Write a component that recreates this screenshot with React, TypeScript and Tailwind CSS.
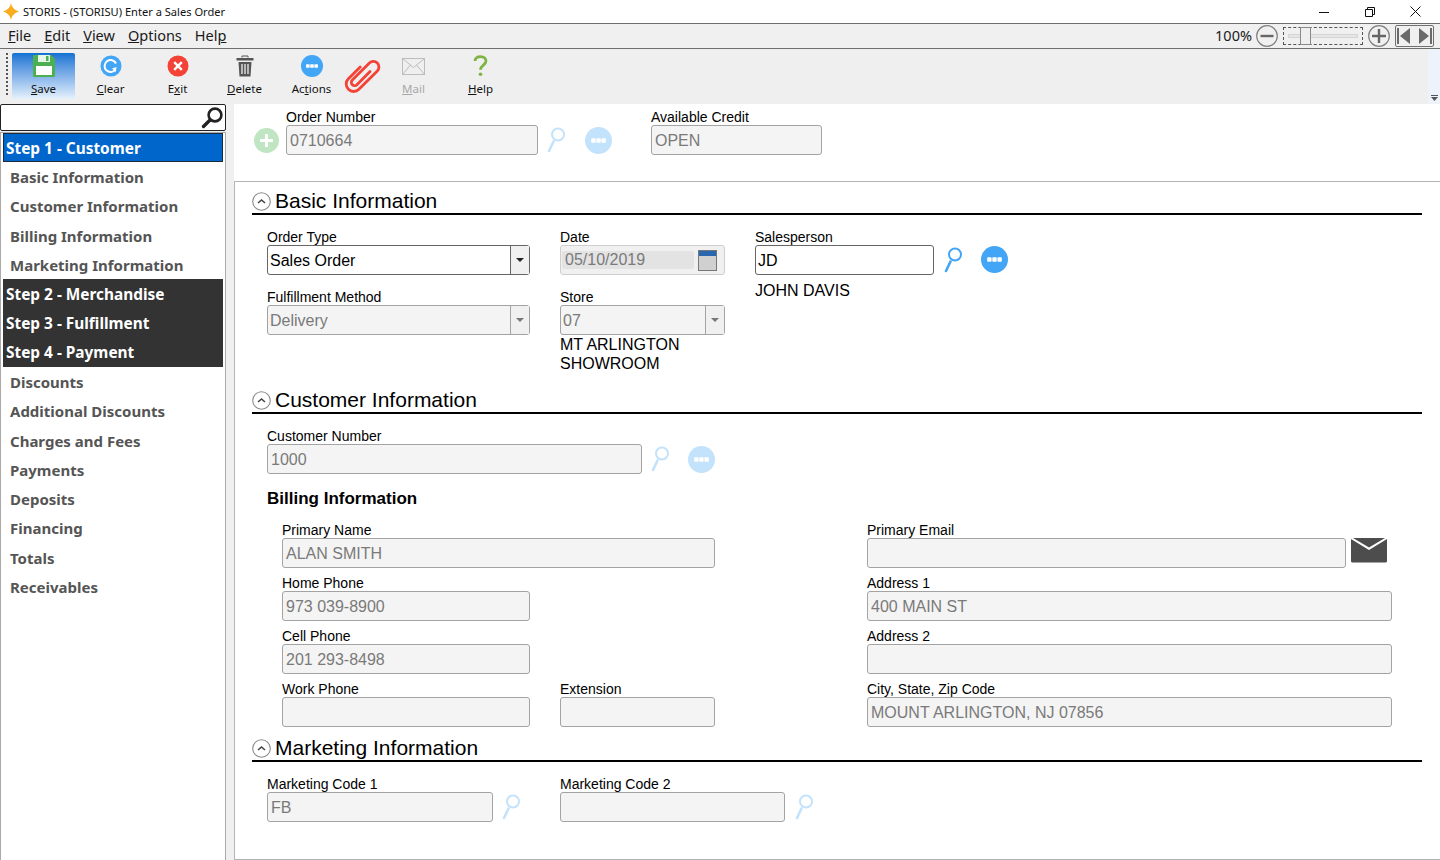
import type { ReactNode } from 'react'

const SEGOE = "font-['Noto_Sans',sans-serif]"

function SearchGlass({ off }: { off?: boolean }) {
  const color = off ? '#c3e2fb' : '#42a5f5'
  return (
    <svg width="18" height="26" viewBox="0 0 18 26" fill="none">
      <circle cx="11" cy="7.500" r="6" stroke={color} strokeWidth="2" />
      <line x1="6.500" y1="14.500" x2="2" y2="24" stroke={color} strokeWidth="2.600" strokeLinecap="round" />
    </svg>
  )
}

function Dots({ off, size = 27 }: { off?: boolean; size?: number }) {
  return (
    <svg width={size} height={size} viewBox="0 0 27 27">
      <circle cx="13.500" cy="13.500" r="13.500" fill={off ? '#c3e2fb' : '#42a5f5'} />
      <rect x="6.200" y="11.300" width="4.400" height="4.400" rx="0.800" fill="#fff" />
      <rect x="11.300" y="11.300" width="4.400" height="4.400" rx="0.800" fill="#fff" />
      <rect x="16.400" y="11.300" width="4.400" height="4.400" rx="0.800" fill="#fff" />
    </svg>
  )
}

function Caret({ off }: { off?: boolean }) {
  return (
    <svg width="8" height="4" viewBox="0 0 8 4">
      <path d="M0 0h8L4 4z" fill={off ? '#777' : '#222'} />
    </svg>
  )
}

function Label({ children }: { children: ReactNode }) {
  return <div className="h-[15px] text-[14px] leading-[15px] text-black whitespace-nowrap">{children}</div>
}

function Input({ value, w, active }: { value?: string; w: string; active?: boolean }) {
  return (
    <div
      className={`${w} h-[30px] rounded-[3px] border text-[16px] leading-[30px] whitespace-nowrap ${
        active ? 'border-[#666] bg-white px-[2px] text-black' : 'border-[#a3a3a3] bg-[#f4f4f4] px-[3px] text-[#7a7a7a]'
      }`}
    >
      {value}
    </div>
  )
}

function Field({ label, value, w, active }: { label: string; value?: string; w: string; active?: boolean }) {
  return (
    <div>
      <Label>{label}</Label>
      <Input value={value} w={w} active={active} />
    </div>
  )
}

function Select({ value, w, off }: { value: string; w: string; off?: boolean }) {
  return (
    <div
      className={`${w} flex h-[30px] rounded-[3px] border text-[16px] leading-[30px] ${
        off ? 'border-[#a3a3a3] bg-[#f4f4f4] text-[#7a7a7a]' : 'border-[#666] bg-white text-black'
      }`}
    >
      <div className="h-[28px] flex-1 px-[2px]">{value}</div>
      <div
        className={`flex w-[19px] items-center justify-center border-l bg-[#f0f0f0] ${
          off ? 'border-[#a3a3a3]' : 'border-[#666]'
        }`}
      >
        <Caret off={off} />
      </div>
    </div>
  )
}

function SectionHeader({ title }: { title: string }) {
  return (
    <div className="ml-[17px] mr-[18px] flex h-[25px] items-center gap-[4px] border-b-2 border-black pb-[1px]">
      <svg width="19" height="19" viewBox="0 0 19 19" fill="none" className="shrink-0">
        <circle cx="9.500" cy="9.500" r="8.800" stroke="#8a8a8a" strokeWidth="1.100" />
        <path d="M6 11l3.500-3 3.500 3" stroke="#444" strokeWidth="1.600" />
      </svg>
      <span className="text-[21px] leading-[24px] text-black whitespace-nowrap">{title}</span>
    </div>
  )
}

function ToolButton({ label, icon, active, off }: { label: [string, string, string]; icon: ReactNode; active?: boolean; off?: boolean }) {
  return (
    <div
      className={`flex h-[46px] w-[63px] flex-col items-center rounded-[2px] ${
        active ? 'bg-gradient-to-b from-[#0a72d2] to-[#e6f1fb]' : ''
      }`}
    >
      <div className="flex h-[26px] items-center justify-center">{icon}</div>
      <div className={`${SEGOE} mt-[2px] text-[11.500px] leading-[16px] whitespace-nowrap ${off ? 'text-[#a8a8a8]' : 'text-[#111]'}`}>
        {label[0]}
        <span className="underline">{label[1]}</span>
        {label[2]}
      </div>
    </div>
  )
}

const SIDE_ROWS: { text: string; kind: 'blue' | 'dark' | 'item' }[] = [
  { text: 'Step 1 - Customer', kind: 'blue' },
  { text: 'Basic Information', kind: 'item' },
  { text: 'Customer Information', kind: 'item' },
  { text: 'Billing Information', kind: 'item' },
  { text: 'Marketing Information', kind: 'item' },
  { text: 'Step 2 - Merchandise', kind: 'dark' },
  { text: 'Step 3 - Fulfillment', kind: 'dark' },
  { text: 'Step 4 - Payment', kind: 'dark' },
  { text: 'Discounts', kind: 'item' },
  { text: 'Additional Discounts', kind: 'item' },
  { text: 'Charges and Fees', kind: 'item' },
  { text: 'Payments', kind: 'item' },
  { text: 'Deposits', kind: 'item' },
  { text: 'Financing', kind: 'item' },
  { text: 'Totals', kind: 'item' },
  { text: 'Receivables', kind: 'item' },
]

function Sidebar() {
  return (
    <aside className="flex w-[226px] shrink-0 flex-col">
      <div className="flex h-[27px] items-center justify-end rounded-[2px] border border-[#222] bg-white pr-[1px]">
        <svg width="23" height="23" viewBox="0 0 23 23" fill="none">
          <circle cx="14" cy="9" r="6.400" stroke="#222" strokeWidth="2.600" />
          <line x1="9" y1="14" x2="2.500" y2="20.500" stroke="#222" strokeWidth="3.400" strokeLinecap="round" />
        </svg>
      </div>
      <div className={`${SEGOE} mt-[1px] flex-1 border border-b-0 border-[#aaa] bg-white pl-[2px] pr-[2px] text-[15px] font-bold`}>
        {SIDE_ROWS.map(row => (
          <div
            key={row.text}
            className={`flex h-[29.270px] items-center whitespace-nowrap pt-[1px] ${
              row.kind === 'blue'
                ? 'border border-[#1c2b3a] bg-[#0066cc] pl-[2px] text-[15.400px] text-white'
                : row.kind === 'dark'
                  ? 'bg-[#333333] pl-[3px] text-[15.400px] text-white'
                  : 'pl-[7px] text-[#555555]'
            }`}
          >
            {row.text}
          </div>
        ))}
      </div>
    </aside>
  )
}

export default function App() {
  return (
    <div className="flex h-[860px] w-[1440px] flex-col overflow-hidden bg-[#f0f0f0] font-['Liberation_Sans',sans-serif]">
      {/* Title bar */}
      <div className="flex h-[23px] items-center bg-white pl-[3px]">
        <svg width="16" height="17" viewBox="0 0 16 17">
          <path d="M8 0c.8 4.300 2.700 6.500 8 8.500-5.300 2-7.200 4.200-8 8.500-.8-4.300-2.700-6.500-8-8.500C5.300 6.500 7.200 4.300 8 0z" fill="#f9ad1e" />
        </svg>
        <span className={`${SEGOE} ml-[4px] pt-[1px] text-[11.100px] text-[#111]`}>STORIS - (STORISU) Enter a Sales Order</span>
        <div className="ml-auto flex items-center pr-[2px]">
          <div className="flex w-[45.500px] justify-center">
            <svg width="10" height="10" viewBox="0 0 10 10"><path d="M0 5.500h10" stroke="#111" /></svg>
          </div>
          <div className="flex w-[45.500px] justify-center">
            <svg width="10" height="10" viewBox="0 0 10 10" fill="none">
              <path d="M.5 2.500h7v7h-7zM2.500 2.500v-2h7v7h-2" stroke="#111" />
            </svg>
          </div>
          <div className="flex w-[45.500px] justify-center">
            <svg width="11" height="11" viewBox="0 0 11 11"><path d="M.5.500l10 10M10.500.500l-10 10" stroke="#111" /></svg>
          </div>
        </div>
      </div>

      {/* Menu bar */}
      <div className="flex h-[26px] items-center border-y border-[#6e6e6e] bg-[#f0f0f0] pl-[8px]">
        <div className={`${SEGOE} flex gap-[13px] text-[14.500px] text-[#1a1a1a]`}>
          <span><span className="underline">F</span>ile</span>
          <span><span className="underline">E</span>dit</span>
          <span><span className="underline">V</span>iew</span>
          <span><span className="underline">O</span>ptions</span>
          <span>Hel<span className="underline">p</span></span>
        </div>
        <div className="ml-auto flex items-center pr-[6px]">
          <span className={`${SEGOE} mr-[4px] text-[14.500px] text-[#1a1a1a]`}>100%</span>
          <svg width="22" height="22" viewBox="0 0 22 22" fill="none">
            <circle cx="11" cy="11" r="10.300" stroke="#808080" strokeWidth="1.200" />
            <path d="M4.500 11h13" stroke="#666" strokeWidth="2.400" />
          </svg>
          <div className="relative ml-[5px] flex h-[18px] w-[80px] items-center border border-dashed border-[#555] px-[4px]">
            <div className="h-[4px] w-full border border-[#d5d5d5] bg-[#e6e6e6]" />
            <div className="absolute left-[16px] top-[-1px] h-[18px] w-[11px] border border-[#8a8a8a] bg-[#efefef]" />
          </div>
          <svg width="22" height="22" viewBox="0 0 22 22" fill="none" className="ml-[5px]">
            <circle cx="11" cy="11" r="10.300" stroke="#808080" strokeWidth="1.200" />
            <path d="M4 11h14M11 4v14" stroke="#666" strokeWidth="2.400" />
          </svg>
          <div className="ml-[5px] flex h-[22px] w-[39px] items-center justify-between rounded-[2px] border border-[#707070] px-[1px]">
            <svg width="13" height="16" viewBox="0 0 13 16"><path d="M0 0h2v16H0zM13 0v16L3 8z" fill="#6a6a6a" /></svg>
            <svg width="13" height="16" viewBox="0 0 13 16"><path d="M11 0h2v16h-2zM0 0v16l10-8z" fill="#6a6a6a" /></svg>
          </div>
        </div>
      </div>

      {/* Toolbar */}
      <div className="flex h-[55px] items-start bg-[#efefef] pl-[6px] pt-[4px]">
        <div className="mr-[4px] h-[42px] w-[2px] border-l-2 border-dotted border-[#555]" />
        <div className="flex">
          <ToolButton
            active
            label={['', 'S', 'ave']}
            icon={
              <svg width="22" height="22" viewBox="0 0 22 22">
                <path d="M1 0h17l4 4v17a1 1 0 01-1 1H1a1 1 0 01-1-1V1a1 1 0 011-1z" fill="#4caf50" />
                <rect x="3" y="11" width="16" height="9" fill="#fff" />
                <rect x="5" y="0" width="12" height="7" fill="#e8f5e9" />
                <rect x="13" y="1" width="2.500" height="5" fill="#4caf50" />
              </svg>
            }
          />
          <div className="w-[4px]" />
          <ToolButton
            label={['', 'C', 'lear']}
            icon={
              <svg width="22" height="22" viewBox="0 0 22 22" fill="none">
                <circle cx="11" cy="11" r="10.500" fill="#42a5f5" />
                <path d="M15.500 14.500A6 6 0 1 1 16 8.500" stroke="#fff" strokeWidth="2" />
                <path d="M12 13.500l3.800 3.500.7-5z" fill="#fff" />
              </svg>
            }
          />
          <div className="w-[4px]" />
          <ToolButton
            label={['E', 'x', 'it']}
            icon={
              <svg width="22" height="22" viewBox="0 0 22 22" fill="none">
                <circle cx="11" cy="11" r="10.500" fill="#f44336" />
                <path d="M7.200 7.200l7.600 7.600M14.800 7.200l-7.600 7.600" stroke="#fff" strokeWidth="2.400" />
              </svg>
            }
          />
          <div className="w-[4px]" />
          <ToolButton
            label={['', 'D', 'elete']}
            icon={
              <svg width="18" height="22" viewBox="0 0 18 22" fill="none">
                <path d="M6 2.500V1h6v1.500" stroke="#555" />
                <rect x="0.500" y="3" width="17" height="2.500" fill="#555" />
                <path d="M2.500 7h13l-1 14.500h-11z" fill="#555" />
                <path d="M6 9v10M9 9v10M12 9v10" stroke="#efefef" strokeWidth="1.300" />
              </svg>
            }
          />
          <div className="w-[4px]" />
          <ToolButton label={['Ac', 't', 'ions']} icon={<Dots size={22} />} />
          <div className="flex w-[39px] justify-center">
            <svg width="40" height="40" viewBox="0 0 40 40" fill="none" className="mt-[3px] shrink-0">
              <g transform="translate(20.500 19.500) rotate(45) scale(0.930)">
                <path
                  d="M2-8V12a3.500 3.500 0 0 1-7 0V-14a6 6 0 0 1 12 0V14a8 8 0 0 1-16 0V-4"
                  stroke="#f44336"
                  strokeWidth="3"
                  strokeLinecap="round"
                />
              </g>
            </svg>
          </div>
          <ToolButton
            off
            label={['', 'M', 'ail']}
            icon={
              <svg width="23" height="17" viewBox="0 0 23 17" fill="none">
                <rect x="0.500" y="0.500" width="22" height="16" stroke="#bcbcbc" />
                <path d="M.5.500l11 9 11-9M.5 16.500l8-9.500M22.500 16.500l-8-9.500" stroke="#bcbcbc" />
              </svg>
            }
          />
          <div className="w-[4px]" />
          <ToolButton
            label={['', 'H', 'elp']}
            icon={
              <svg width="15" height="22" viewBox="0 0 16 24" fill="none">
                <path d="M2 6.500C2 3.500 4.500 1.800 8 1.800s6 2 6 4.800c0 4.400-6 4.400-6 9.400" stroke="#7cb342" strokeWidth="3" />
                <circle cx="8" cy="21" r="2" fill="#7cb342" />
              </svg>
            }
          />
        </div>
        <div className="ml-auto flex h-[55px] w-[12px] -translate-y-[4px] flex-col items-center justify-end bg-[#eef3fb] pb-[3px]">
          <div className="mb-[1px] h-[1px] w-[7px] bg-[#555]" />
          <svg width="7" height="4" viewBox="0 0 7 4"><path d="M0 0h7L3.500 4z" fill="#555" /></svg>
        </div>
      </div>

      {/* Body */}
      <div className="flex min-h-0 flex-1">
        <Sidebar />
        <main className="ml-[8px] flex min-w-0 flex-1 flex-col bg-white">
          {/* Order header */}
          <div className="flex h-[78px] shrink-0 border-b border-[#b5b5b5] pl-[20px] pt-[6px]">
            <div className="mt-[18px] flex h-[24px] w-[32px] items-start">
              <svg width="25" height="25" viewBox="0 0 25 25">
                <circle cx="12.500" cy="12.500" r="12.500" fill="#bfe5c2" />
                <path d="M12.500 6v13M6 12.500h13" stroke="#fff" strokeWidth="3" />
              </svg>
            </div>
            <Field label="Order Number" value="0710664" w="w-[252px]" />
            <div className="ml-[9px] mt-[17px]"><SearchGlass off /></div>
            <div className="ml-[20px] mt-[17px]"><Dots off /></div>
            <div className="ml-[39px]">
              <Field label="Available Credit" value="OPEN" w="w-[171px]" />
            </div>
          </div>

          {/* Main form box */}
          <div className="flex-1 border-b border-l border-[#b5b5b5] pt-[8px]">
            <SectionHeader title="Basic Information" />
            <div className="ml-[32px] mt-[15px] flex">
              <div className="flex w-[293px] flex-col gap-[15px]">
                <div>
                  <Label>Order Type</Label>
                  <Select value="Sales Order" w="w-[263px]" />
                </div>
                <div>
                  <Label>Fulfillment Method</Label>
                  <Select value="Delivery" w="w-[263px]" off />
                </div>
              </div>
              <div className="flex w-[195px] flex-col gap-[15px]">
                <div>
                  <Label>Date</Label>
                  <div className="flex h-[30px] w-[165px] items-center gap-[4px] rounded-[3px] border border-[#cfcfcf] bg-[#f0f0f0] pl-[1px] pr-[5px]">
                    <div className="h-[18px] w-[132px] rounded-[2px] bg-[#e3e3e3] pl-[3px] text-[16px] leading-[18px] text-[#7a7a7a]">
                      05/10/2019
                    </div>
                    <div className="h-[21px] w-[19px] border border-[#777] bg-[#d0d0d0]">
                      <div className="h-[5px] bg-[#2a66ad]" />
                    </div>
                  </div>
                </div>
                <div>
                  <Label>Store</Label>
                  <Select value="07" w="w-[165px]" off />
                  <div className="text-[16px] leading-[19px] text-black">
                    MT ARLINGTON
                    <br />
                    SHOWROOM
                  </div>
                </div>
              </div>
              <div>
                <Label>Salesperson</Label>
                <div className="flex items-start">
                  <Input value="JD" w="w-[179px]" active />
                  <div className="ml-[10px] mt-[2px]"><SearchGlass /></div>
                  <div className="ml-[19px] mt-[1px]"><Dots /></div>
                </div>
                <div className="mt-[6px] text-[16px] leading-[19px] text-black">JOHN DAVIS</div>
              </div>
            </div>

            <div className="mt-[16px]">
              <SectionHeader title="Customer Information" />
            </div>
            <div className="ml-[32px] mt-[15px] flex items-start">
              <Field label="Customer Number" value="1000" w="w-[375px]" />
              <div className="ml-[9px] mt-[17px]"><SearchGlass off /></div>
              <div className="ml-[19px] mt-[17px]"><Dots off /></div>
            </div>
            <div className="ml-[32px] mt-[15px] text-[17px] font-bold leading-[20px] text-black">Billing Information</div>
            <div className="ml-[47px] mt-[14px] flex">
              <div className="flex w-[585px] flex-col gap-[8px]">
                <Field label="Primary Name" value="ALAN SMITH" w="w-[433px]" />
                <Field label="Home Phone" value="973 039-8900" w="w-[248px]" />
                <Field label="Cell Phone" value="201 293-8498" w="w-[248px]" />
                <div className="flex gap-[30px]">
                  <Field label="Work Phone" w="w-[248px]" />
                  <Field label="Extension" w="w-[155px]" />
                </div>
              </div>
              <div className="flex flex-col gap-[8px]">
                <div>
                  <Label>Primary Email</Label>
                  <div className="flex items-start">
                    <Input w="w-[479px]" />
                    <svg width="36" height="25" viewBox="0 0 36 25" className="ml-[5px]">
                      <path d="M0 1l18 11L36 1v22a1.500 1.500 0 0 1-1.500 1.500h-33A1.500 1.500 0 0 1 0 23z" fill="#4d4d4d" />
                      <path d="M2 0h32L18 9.500z" fill="#4d4d4d" />
                    </svg>
                  </div>
                </div>
                <Field label="Address 1" value="400 MAIN ST" w="w-[525px]" />
                <Field label="Address 2" w="w-[525px]" />
                <Field label="City, State, Zip Code" value="MOUNT ARLINGTON, NJ 07856" w="w-[525px]" />
              </div>
            </div>

            <div className="mt-[10px]">
              <SectionHeader title="Marketing Information" />
            </div>
            <div className="ml-[32px] mt-[15px] flex items-start">
              <Field label="Marketing Code 1" value="FB" w="w-[226px]" />
              <div className="ml-[9px] mt-[17px]"><SearchGlass off /></div>
              <div className="ml-[40px]">
                <Field label="Marketing Code 2" w="w-[225px]" />
              </div>
              <div className="ml-[10px] mt-[17px]"><SearchGlass off /></div>
            </div>
          </div>
        </main>
      </div>
    </div>
  )
}
